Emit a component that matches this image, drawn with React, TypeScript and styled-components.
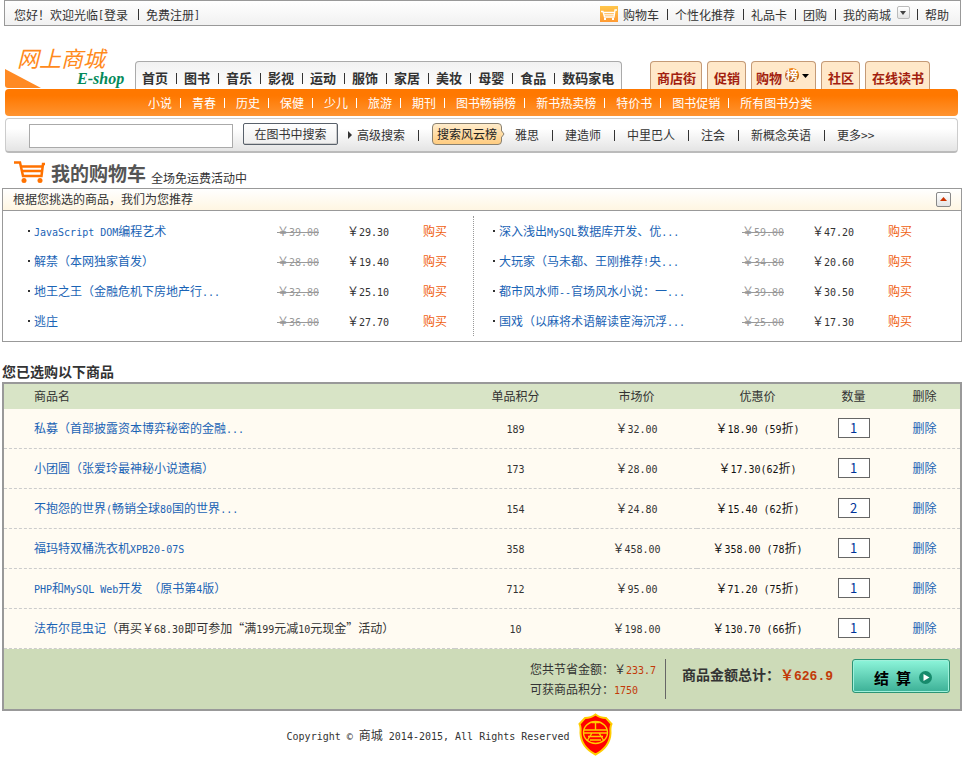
import React, { Fragment, useState } from "react";
import styled, { createGlobalStyle, css } from "styled-components";

const GlobalStyle = createGlobalStyle`
  * { box-sizing: border-box; }
  body {
    margin: 0;
    background: #fff;
    color: #333;
    font: 12px/20px "Noto Sans CJK SC", sans-serif;
  }
  a { color: inherit; text-decoration: none; }
  h1, h2, p, ul { margin: 0; padding: 0; }
  ul { list-style: none; }
  button, input { font-family: inherit; }
`;

/* Latin letters and digits are set at half the width of a Chinese character. */
const Half = styled.span`
  font-family: "DejaVu Sans Mono", monospace;
  font-size: 10px;
  line-height: 1;
  white-space: pre;
`;

const Mixed = ({ children }: { children: string }) => (
  <>
    {children.split(/([\x20-\x7e©]+)/).map((part, i) =>
      i % 2 ? <Half key={i}>{part}</Half> : <Fragment key={i}>{part}</Fragment>
    )}
  </>
);

const Bar = styled.span<{ $width: number; $lead?: number; $tall?: number }>`
  flex: none;
  width: ${(p) => p.$width}px;
  height: ${(p) => p.$tall ?? 11}px;
  padding-left: ${(p) => p.$lead ?? Math.floor(p.$width / 2)}px;
  &::before {
    content: "";
    display: block;
    width: 1px;
    height: 100%;
    background: currentColor;
  }
`;

const TopBar = styled.div`
  display: flex;
  justify-content: space-between;
  align-items: center;
  height: 26px;
  margin: 0 3px 0 4px;
  padding: 3px 11px 0 9px;
  border: 1px solid #999;
  background: linear-gradient(#fff, #f1f1f1);
`;

const Group = styled.div`
  display: flex;
  align-items: center;
  white-space: nowrap;
`;

const CartSmall = styled.svg`
  display: block;
  margin: 0 5px 2px 0;
`;

const ArrowButton = styled.button<{ $size: number }>`
  display: flex;
  align-items: center;
  justify-content: center;
  width: ${(p) => p.$size}px;
  height: ${(p) => p.$size}px;
  padding: 0;
  border: 1px solid #888;
  border-radius: 2px;
  background: linear-gradient(#fff, #e4e4e4);
`;

const AccountButton = styled(ArrowButton)`
  margin: 0 0 4px 6px;
  border-color: #bbb;
`;

const Header = styled.header`
  margin: 0 6px 0 5px;
`;

const HeaderRow = styled.div`
  display: flex;
  align-items: flex-end;
  height: 63px;
  white-space: nowrap;
`;

const Logo = styled.a`
  flex: none;
  width: 130px;
`;

const LogoName = styled.div`
  padding: 0 0 1px 12px;
  color: #ff8a1c;
  font-size: 22px;
  font-style: italic;
  line-height: 22px;
`;

const LogoSub = styled.div`
  display: flex;
  gap: 36px;
  height: 20px;
  color: #048a5b;
  font: italic bold 16px/20px "Liberation Serif", serif;
`;

const MainNav = styled.nav`
  display: flex;
  align-items: center;
  height: 28px;
  padding: 5px 7px 0 6px;
  border: 1px solid #aaa;
  border-bottom: 0;
  border-radius: 4px 4px 0 0;
  background: linear-gradient(#f1f1f1, #fff);
  font-size: 13px;
  font-weight: bold;
`;

const SideNav = styled.nav`
  display: flex;
  gap: 5px;
  margin-left: auto;
  padding-right: 28px;
`;

const SideTab = styled.a`
  display: flex;
  align-items: center;
  gap: 3px;
  height: 28px;
  padding: 5px 5px 0 6px;
  border: 1px solid #c49a76;
  border-bottom: 0;
  border-radius: 4px 4px 0 0;
  background: #ffe8c9;
  color: #a31f10;
  font-size: 13px;
  font-weight: bold;
`;

const HotMark = styled.span`
  width: 14px;
  height: 14px;
  margin-bottom: 6px;
  border-radius: 50%;
  background: linear-gradient(#f58a1e, #9c3d00);
  color: #fff;
  font-size: 12px;
  line-height: 14px;
  text-align: center;
`;

const HotTab = styled(SideTab)`
  padding-left: 4px;
`;

const SubNav = styled.nav`
  display: flex;
  align-items: center;
  height: 27px;
  padding: 1px 0 0 143px;
  border-radius: 4px;
  background: linear-gradient(#ff7800 25%, #ff9431);
  color: #fff;
  white-space: nowrap;
`;

const SearchBar = styled.form`
  display: flex;
  align-items: center;
  height: 35px;
  margin-top: 2px;
  padding: 0 0 0 23px;
  border: 1px solid #ccc;
  border-bottom: 2px solid #bbb;
  border-radius: 4px;
  background: linear-gradient(#fff 30%, #e4e4e4);
  white-space: nowrap;
`;

const SearchInput = styled.input`
  width: 204px;
  height: 24px;
  margin: 1px 10px 0 0;
  padding: 0 4px;
  border: 1px solid #aaa;
  background: #fff;
`;

const SearchButton = styled.button`
  width: 95px;
  height: 22px;
  margin: 0 10px 2px 0;
  padding: 0;
  border: 1px solid #59616b;
  border-radius: 2px;
  background: linear-gradient(#fff, #eee);
  box-shadow: inset -1px -1px #ccc;
  color: #333;
  font-size: 12px;
  line-height: 18px;
`;

const Advanced = styled.a`
  display: flex;
  align-items: center;
  gap: 5px;
`;

const Ranking = styled.a`
  display: flex;
  align-items: center;
  margin: 0 10px 2px 0;
  color: #222;
`;

const RankingLabel = styled.span`
  height: 22px;
  padding: 0 4px;
  border: 1px solid #888070;
  border-radius: 4px;
  background: linear-gradient(#ffeccb, #ffcc80);
`;

const RankingTip = styled.svg`
  display: block;
  margin-left: -1px;
`;

const CartTitle = styled.div`
  display: flex;
  align-items: flex-end;
  height: 35px;
  padding: 0 0 0 14px;
  h1 {
    margin: 0 5px 1px 6px;
    color: #555;
    font-size: 19px;
    line-height: 28px;
  }
`;

const CartLarge = styled.svg`
  display: block;
  margin-bottom: 4px;
`;

const Suggestions = styled.section`
  margin: 0 2px;
  border: 1px solid #999;
`;

const SuggestionsHead = styled.div`
  display: flex;
  justify-content: space-between;
  align-items: center;
  height: 22px;
  padding: 0 10px 1px;
  border-bottom: 1px solid #999;
  background: linear-gradient(#fff, #fff6e2);
`;

const SuggestionColumns = styled.div`
  display: grid;
  grid-template-columns: minmax(0, 471fr) minmax(0, 487fr);
  padding: 5px 0;
`;

const SuggestionList = styled.ul<{ $first: boolean }>`
  ${(p) =>
    p.$first
      ? css`
          padding: 0 26px 0 25px;
          border-right: 1px dotted #999;
        `
      : css`
          padding: 0 49px 0 19px;
        `}
`;

const Suggestion = styled.li`
  display: grid;
  grid-template-columns: 6px 1fr 70px 76px 24px;
  align-items: center;
  height: 30px;
  white-space: nowrap;
  &::before {
    content: "";
    width: 2px;
    height: 2px;
    background: #333;
  }
`;

const BlueLink = styled.a`
  color: #1a63b5;
`;

const BuyLink = styled.a`
  color: #f06010;
`;

const OldPrice = styled.del`
  background: linear-gradient(#999, #999) 0 60% / 100% 1px no-repeat;
  color: #999;
  text-decoration: none;
`;

const ChosenTitle = styled.h2`
  padding: 19px 2px 1px;
  font-size: 14px;
  line-height: 20px;
`;

const Cart = styled.section`
  margin: 0 2px;
  border: 2px solid #999;
  background: #cddbb8;
`;

const CartTable = styled.table`
  width: 100%;
  border-spacing: 0;
  table-layout: fixed;
  background: #fffbf2;
  text-align: center;
  white-space: nowrap;
  th {
    height: 25px;
    padding: 0 0 1px;
    background: #d8e4c6;
    font-weight: normal;
  }
  td {
    height: 40px;
    padding: 0 0 1px;
    border-bottom: 1px dashed #ccc;
  }
  th:first-child,
  td:first-child {
    padding-left: 30px;
    text-align: left;
  }
`;

const Col = styled.col<{ $width?: number }>`
  width: ${(p) => (p.$width ? `${p.$width}px` : "auto")};
`;

const OfferCell = styled.td`
  color: #111;
`;

const Quantity = styled.input`
  display: block;
  width: 32px;
  height: 20px;
  margin: 0 auto 1px;
  padding: 0;
  border: 1px solid #666;
  background: #fff;
  color: #039;
  font-size: 13px;
  text-align: center;
`;

const Summary = styled.div`
  display: flex;
  justify-content: flex-end;
  align-items: flex-start;
  height: 60px;
  padding: 10px 10px 0 0;
  white-space: nowrap;
`;

const Savings = styled.div`
  width: 136px;
  height: 40px;
  border-right: 1px solid #666;
`;

const Amount = styled.strong<{ $bold?: boolean }>`
  color: #c23a08;
  font-weight: ${(p) => (p.$bold ? "bold" : "normal")};
`;

const Total = styled.div`
  width: 170px;
  margin: 5px 0 0 16px;
  font-size: 14px;
  font-weight: bold;
`;

const TotalDigits = styled.span`
  font-family: "Liberation Mono", monospace;
  font-size: 13px;
`;

const Checkout = styled.button`
  display: flex;
  align-items: center;
  justify-content: center;
  gap: 8px;
  width: 98px;
  height: 34px;
  padding: 2px 0 0 4px;
  border: 1px solid #2c9475;
  border-radius: 3px;
  background: linear-gradient(#8df5da, #3cb096);
  box-shadow: inset 0 0 0 1px #9ff0db;
  color: #000;
  font-size: 15px;
  font-weight: bold;
`;

const Footer = styled.footer`
  display: flex;
  justify-content: center;
  align-items: center;
  gap: 9px;
  padding: 2px 64px 0 0;
`;

const mainLinks = ["首页", "图书", "音乐", "影视", "运动", "服饰", "家居", "美妆", "母婴", "食品", "数码家电"];
const subLinks = ["小说", "青春", "历史", "保健", "少儿", "旅游", "期刊", "图书畅销榜", "新书热卖榜", "特价书", "图书促销", "所有图书分类"];
const hotLinks = ["雅思", "建造师", "中里巴人", "注会", "新概念英语", "更多>>"];

const suggestions = [
  [
    ["JavaScript DOM编程艺术", "39.00", "29.30"],
    ["解禁（本网独家首发）", "28.00", "19.40"],
    ["地王之王（金融危机下房地产行...", "32.80", "25.10"],
    ["逃庄", "36.00", "27.70"],
  ],
  [
    ["深入浅出MySQL数据库开发、优...", "59.00", "47.20"],
    ["大玩家（马未都、王刚推荐!央...", "34.80", "20.60"],
    ["都市风水师--官场风水小说：一...", "39.80", "30.50"],
    ["国戏（以麻将术语解读宦海沉浮...", "25.00", "17.30"],
  ],
];

const products = [
  { name: "私募（首部披露资本博弈秘密的金融...", points: "189", price: "￥32.00", offer: "￥18.90 (59折)", count: 1 },
  { name: "小团圆（张爱玲最神秘小说遗稿）", points: "173", price: "￥28.00", offer: "￥17.30(62折)", count: 1 },
  { name: "不抱怨的世界(畅销全球80国的世界...", points: "154", price: "￥24.80", offer: "￥15.40 (62折)", count: 2 },
  { name: "福玛特双桶洗衣机XPB20-07S", points: "358", price: "￥458.00", offer: "￥358.00 (78折)", count: 1 },
  { name: "PHP和MySQL Web开发 （原书第4版）", points: "712", price: "￥95.00", offer: "￥71.20 (75折)", count: 1 },
  {
    name: "法布尔昆虫记",
    note: "（再买￥68.30即可参加“满199元减10元现金”活动）",
    points: "10",
    price: "￥198.00",
    offer: "￥130.70 (66折)",
    count: 1,
  },
];

const Links = ({ items, width, lead, tall }: { items: string[]; width: number; lead?: number; tall?: number }) => (
  <>
    {items.map((item, i) => (
      <Fragment key={item}>
        {i > 0 && <Bar $width={width} $lead={lead} $tall={tall} />}
        <a href="#">{item}</a>
      </Fragment>
    ))}
  </>
);

const Triangle = ({ d, w, h, fill }: { d: string; w: number; h: number; fill: string }) => (
  <svg width={w} height={h} aria-hidden="true">
    <path d={d} fill={fill} />
  </svg>
);

export default function App() {
  const [open, setOpen] = useState(true);
  const [counts, setCounts] = useState(products.map((p) => String(p.count)));

  return (
    <>
      <GlobalStyle />
      <TopBar>
        <Group>
          您好！欢迎光临<Half>[</Half>
          <a href="#">登录</a>
          <Bar $width={18} $lead={10} />
          <a href="#">免费注册</a>
          <Half>]</Half>
        </Group>
        <Group>
          <CartSmall width="18" height="16" viewBox="0 0 18 16" aria-hidden="true">
            <defs>
              <linearGradient id="cartTile" x1="0" y1="0" x2="0" y2="1">
                <stop offset="0" stopColor="#ffc64a" />
                <stop offset="1" stopColor="#ff9a33" />
              </linearGradient>
            </defs>
            <rect width="18" height="16" fill="url(#cartTile)" />
            <path d="M1 5.500h2l1.500 5.500h9.500L15 4h2M4 6.500h10M4.500 8.800h9.500" fill="none" stroke="#fff" strokeWidth="1.300" />
            <path d="M4 12h2v2H4zM12 12h2v2h-2z" fill="#fff" />
          </CartSmall>
          <Links items={["购物车", "个性化推荐", "礼品卡", "团购", "我的商城"]} width={16} />
          <AccountButton $size={13} type="button" aria-label="展开我的商城">
            <Triangle d="M0 0h6L3 4z" w={6} h={4} fill="#444" />
          </AccountButton>
          <Bar $width={15} />
          <a href="#">帮助</a>
        </Group>
      </TopBar>

      <Header>
        <HeaderRow>
          <Logo href="#">
            <LogoName>网上商城</LogoName>
            <LogoSub>
              <svg width="36" height="19" aria-hidden="true">
                <path d="M0 0L36 19H3Q0 19 0 16Z" fill="#ff8a24" />
              </svg>
              E-shop
            </LogoSub>
          </Logo>
          <MainNav>
            <Links items={mainLinks} width={16} />
          </MainNav>
          <SideNav>
            <SideTab href="#">商店街</SideTab>
            <SideTab href="#">促销</SideTab>
            <HotTab href="#">
              购物
              <HotMark>榜</HotMark>
              <Triangle d="M0 0h7L3.500 4z" w={8} h={8} fill="#000" />
            </HotTab>
            <SideTab href="#">社区</SideTab>
            <SideTab href="#">在线读书</SideTab>
          </SideNav>
        </HeaderRow>
        <SubNav>
          <Links items={subLinks} width={20} lead={8} tall={10} />
        </SubNav>
        <SearchBar onSubmit={(e) => e.preventDefault()}>
          <SearchInput aria-label="搜索图书" />
          <SearchButton type="submit">在图书中搜索</SearchButton>
          <Advanced href="#">
            <Triangle d="M0 0l4 4-4 4z" w={4} h={8} fill="#333" />
            高级搜索
          </Advanced>
          <Bar $width={27} />
          <Ranking href="#">
            <RankingLabel>搜索风云榜</RankingLabel>
            <RankingTip width="4" height="10" aria-hidden="true">
              <path d="M0 1l3 4-3 4" fill="#ffdda4" stroke="#888070" />
            </RankingTip>
          </Ranking>
          <Links items={hotLinks} width={26} />
        </SearchBar>
      </Header>

      <CartTitle>
        <CartLarge width="31" height="24" viewBox="0 0 31 24" aria-hidden="true">
          <path d="M0 2.500h6l3 13.500h18.500L29 4h2" fill="none" stroke="#ff7200" strokeWidth="2.500" />
          <path d="M7 6.500h21M8 11h20" stroke="#ff7200" strokeWidth="2.500" />
          <circle cx="10" cy="20.500" r="2.500" fill="#ff7200" />
          <circle cx="26" cy="20.500" r="2.500" fill="#ff7200" />
        </CartLarge>
        <h1>我的购物车</h1>
        全场免运费活动中
      </CartTitle>

      <Suggestions>
        <SuggestionsHead>
          根据您挑选的商品，我们为您推荐
          <ArrowButton $size={15} type="button" aria-label="收起推荐" aria-expanded={open} onClick={() => setOpen(!open)}>
            <Triangle d="M0 4h7L3.500 0z" w={7} h={4} fill="#c30" />
          </ArrowButton>
        </SuggestionsHead>
        {open && (
          <SuggestionColumns>
            {suggestions.map((list, i) => (
              <SuggestionList key={i} $first={i === 0}>
                {list.map(([name, old, price]) => (
                  <Suggestion key={name}>
                    <BlueLink href="#">
                      <Mixed>{name}</Mixed>
                    </BlueLink>
                    <span>
                      <OldPrice>
                        <Mixed>{`￥${old}`}</Mixed>
                      </OldPrice>
                    </span>
                    <span>
                      <Mixed>{`￥${price}`}</Mixed>
                    </span>
                    <BuyLink href="#">购买</BuyLink>
                  </Suggestion>
                ))}
              </SuggestionList>
            ))}
          </SuggestionColumns>
        )}
      </Suggestions>

      <ChosenTitle>您已选购以下商品</ChosenTitle>
      <Cart>
        <CartTable>
          <colgroup>
            <Col />
            <Col $width={121} />
            <Col $width={121} />
            <Col $width={121} />
            <Col $width={71} />
            <Col $width={71} />
          </colgroup>
          <thead>
            <tr>
              {["商品名", "单品积分", "市场价", "优惠价", "数量", "删除"].map((h) => (
                <th key={h} scope="col">
                  {h}
                </th>
              ))}
            </tr>
          </thead>
          <tbody>
            {products.map((p, i) => (
              <tr key={p.name}>
                <td>
                  <BlueLink href="#">
                    <Mixed>{p.name}</Mixed>
                  </BlueLink>
                  {p.note && <Mixed>{p.note}</Mixed>}
                </td>
                <td>
                  <Mixed>{p.points}</Mixed>
                </td>
                <td>
                  <Mixed>{p.price}</Mixed>
                </td>
                <OfferCell>
                  <Mixed>{p.offer}</Mixed>
                </OfferCell>
                <td>
                  <Quantity
                    aria-label={`${p.name} 数量`}
                    value={counts[i]}
                    onChange={(e) => setCounts(counts.map((c, k) => (k === i ? e.target.value : c)))}
                  />
                </td>
                <td>
                  <BlueLink href="#">删除</BlueLink>
                </td>
              </tr>
            ))}
          </tbody>
        </CartTable>
        <Summary>
          <Savings>
            <p>
              您共节省金额：￥
              <Amount>
                <Half>233.7</Half>
              </Amount>
            </p>
            <p>
              可获商品积分：
              <Amount>
                <Half>1750</Half>
              </Amount>
            </p>
          </Savings>
          <Total>
            商品金额总计：
            <Amount $bold>
              ￥<TotalDigits>626.9</TotalDigits>
            </Amount>
          </Total>
          <Checkout type="button">
            结{"\u00a0\u00a0"}算
            <svg width="13" height="13" aria-hidden="true">
              <circle cx="6.500" cy="6.500" r="6.500" fill="#178a6c" />
              <path d="M4.500 3l6 3.500-6 3.500z" fill="#fff" />
            </svg>
          </Checkout>
        </Summary>
      </Cart>

      <Footer>
        <span>
          <Mixed>Copyright © 商城 2014-2015, All Rights Reserved</Mixed>
        </span>
        <svg width="35" height="43" viewBox="0 0 35 43" aria-hidden="true">
          <path
            d="M17.500 1.500Q22 5 28 5L33.500 11Q32 14 32.500 20Q32 34 17.500 41.500Q3 34 2.500 20Q3 14 1.500 11L7 5Q13 5 17.500 1.500Z"
            fill="#f00"
            stroke="#fc0"
            strokeWidth="2"
          />
          <g fill="none" stroke="#fc0" strokeWidth="1.400">
            <ellipse cx="17.500" cy="19.500" rx="12" ry="11" />
            <path d="M17.500 9v8M13.500 9.500h8M6 17h23M6 20h23M14 20L9 28M21 20l5 8M10 23.500h15M12 27h11" />
          </g>
        </svg>
      </Footer>
    </>
  );
}
